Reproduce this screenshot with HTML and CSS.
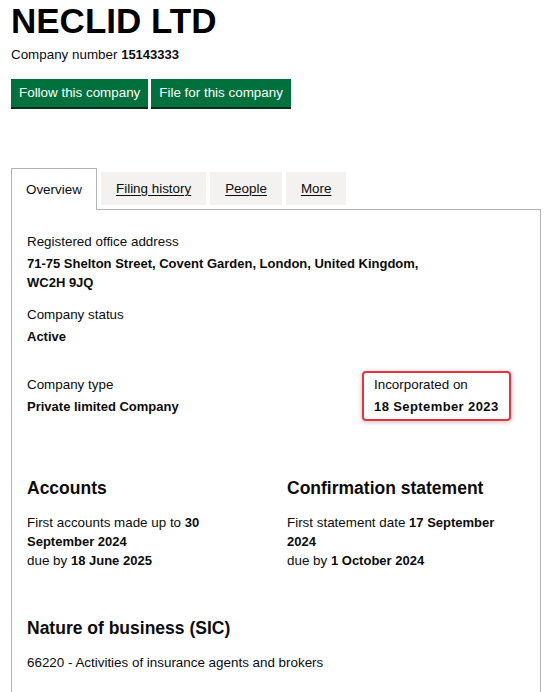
FILE: index.html
```html
<!DOCTYPE html>
<html lang="en">
<head>
<meta charset="utf-8">
<title>NECLID LTD</title>
<link rel="stylesheet" href="styles.css">
</head>
<body>
<header class="company-header">
  <h1 class="company-name">NECLID LTD</h1>
  <p class="company-number">Company number <strong>15143333</strong></p>
  <div class="actions">
    <a class="button" href="#">Follow this company</a>
    <a class="button" href="#">File for this company</a>
  </div>
</header>

<nav class="tabs">
  <span class="tab tab-selected">Overview</span>
  <a class="tab" href="#">Filing history</a>
  <a class="tab" href="#">People</a>
  <a class="tab" href="#">More</a>
</nav>

<main class="panel">
  <dl class="field field-address">
    <dt>Registered office address</dt>
    <dd>71-75 Shelton Street, Covent Garden, London, United Kingdom,<br>WC2H 9JQ</dd>
  </dl>
  <dl class="field field-status">
    <dt>Company status</dt>
    <dd>Active</dd>
  </dl>
  <div class="row row-type">
    <dl class="field col-type">
      <dt>Company type</dt>
      <dd>Private limited Company</dd>
    </dl>
    <dl class="field col-incorporated">
      <dt>Incorporated on</dt>
      <dd>18 September 2023</dd>
    </dl>
  </div>
  <div class="row-dates">
    <div class="col-half">
      <h2 class="heading">Accounts</h2>
      <p class="text">First accounts made up to <strong>30</strong><br><strong>September 2024</strong><br>due by <strong>18 June 2025</strong></p>
    </div>
    <div class="col-half">
      <h2 class="heading">Confirmation statement</h2>
      <p class="text">First statement date <strong>17 September</strong><br><strong>2024</strong><br>due by <strong>1 October 2024</strong></p>
    </div>
  </div>
  <h2 class="heading heading-sic">Nature of business (SIC)</h2>
  <p class="text">66220 - Activities of insurance agents and brokers</p>
</main>
</body>
</html>
```

FILE: styles.css
```css
* { box-sizing: border-box; }

html, body {
  margin: 0;
  padding: 0;
  background: #ffffff;
}

body {
  padding: 0 8px 0 11px;
  font-family: "Liberation Sans", Arial, sans-serif;
  font-size: 13.4px;
  line-height: 19px;
  color: #0b0c0c;
}

strong, dd { font-size: 13px; }

.company-name {
  margin: 0;
  padding-top: 1px;
  font-family: "Liberation Sans", Arial, sans-serif;
  font-weight: 700;
  font-size: 35px;
  line-height: 40px;
  color: #000;
}

.company-number {
  margin: 4px 0 0;
  line-height: 19px;
}

.company-number strong { font-weight: 700; }

.actions {
  display: flex;
  gap: 3px;
  margin-top: 15px;
}

.button {
  display: inline-block;
  height: 28px;
  padding: 0 8px;
  background: #00703c;
  box-shadow: 0 2px 0 #002d18;
  color: #ffffff;
  font-size: 13.4px;
  line-height: 28px;
  text-decoration: none;
}

.tabs {
  display: flex;
  align-items: flex-start;
  gap: 4px;
  margin-top: 61px;
  position: relative;
  z-index: 1;
}

.tab {
  display: block;
  margin-top: 4px;
  height: 33px;
  padding: 0 15px;
  background: #f3f2f1;
  color: #0b0c0c;
  font-size: 13.4px;
  line-height: 33px;
  text-decoration: underline;
  text-underline-offset: 2px;
}

.tab-selected {
  margin-top: 0;
  height: 42px;
  padding: 4px 14px 0;
  background: #ffffff;
  border: 1px solid #b1b4b6;
  border-bottom: 0;
  text-decoration: none;
  width: 86px;
}

.panel {
  margin-top: -1px;
  width: 530px;
  border: 1px solid #b1b4b6;
  padding: 22px 15px 40px;
}

dl, dd { margin: 0; }

.field dt {
  margin-bottom: 3px;
}

.field dd {
  font-weight: 700;
}

.field-address { margin-bottom: 13px; }

.field-status { margin-bottom: 29px; }

.row {
  display: flex;
}

.col-type { width: 347px; }

.col-incorporated {
  position: relative;
}

.col-incorporated dd { letter-spacing: 0.4px; }

.col-incorporated::before {
  content: "";
  position: absolute;
  top: -4px;
  bottom: -5px;
  left: -12px;
  right: -12px;
  border: 2px solid #e8323c;
  border-radius: 4px;
  box-shadow: 0 1px 5px rgba(0, 0, 0, 0.25);
}

.row-dates {
  display: grid;
  grid-template-columns: 260px 1fr;
  margin-top: 60px;
}

.heading {
  margin: 0 0 13px;
  font-family: "Liberation Sans", Arial, sans-serif;
  font-weight: 700;
  font-size: 17.5px;
  line-height: 24px;
  color: #0b0c0c;
}

.text {
  margin: 0;
}

.text strong { font-weight: 700; }

.heading-sic {
  margin-top: 46px;
}
```
